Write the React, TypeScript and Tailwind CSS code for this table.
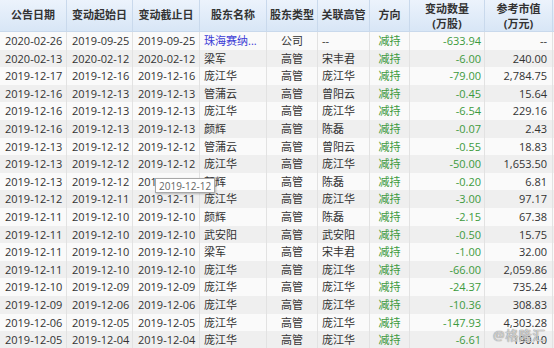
const COLS = 'grid grid-cols-[67px_66px_67px_67px_51px_52px_40px_75px_68px]';

interface Row {
  notice: string;
  start: string;
  end: string;
  holder: string;
  type: string;
  exec: string;
  change: string;
  value: string;
  link?: boolean;
}

const ROWS: Row[] = [
  { notice: '2020-02-26', start: '2019-09-25', end: '2019-09-25', holder: '珠海赛纳...', type: '公司', exec: '--', change: '-633.94', value: '--', link: true },
  { notice: '2020-02-13', start: '2020-02-12', end: '2020-02-12', holder: '梁军', type: '高管', exec: '宋丰君', change: '-6.00', value: '240.00' },
  { notice: '2019-12-17', start: '2019-12-16', end: '2019-12-16', holder: '庞江华', type: '高管', exec: '庞江华', change: '-79.00', value: '2,784.75' },
  { notice: '2019-12-16', start: '2019-12-13', end: '2019-12-13', holder: '管蒲云', type: '高管', exec: '曾阳云', change: '-0.45', value: '15.64' },
  { notice: '2019-12-16', start: '2019-12-13', end: '2019-12-13', holder: '庞江华', type: '高管', exec: '庞江华', change: '-6.54', value: '229.16' },
  { notice: '2019-12-16', start: '2019-12-13', end: '2019-12-13', holder: '颜辉', type: '高管', exec: '陈磊', change: '-0.07', value: '2.43' },
  { notice: '2019-12-13', start: '2019-12-12', end: '2019-12-12', holder: '管蒲云', type: '高管', exec: '曾阳云', change: '-0.55', value: '18.83' },
  { notice: '2019-12-13', start: '2019-12-12', end: '2019-12-12', holder: '庞江华', type: '高管', exec: '庞江华', change: '-50.00', value: '1,653.50' },
  { notice: '2019-12-13', start: '2019-12-12', end: '2019-12-12', holder: '颜辉', type: '高管', exec: '陈磊', change: '-0.20', value: '6.81' },
  { notice: '2019-12-12', start: '2019-12-11', end: '2019-12-11', holder: '庞江华', type: '高管', exec: '庞江华', change: '-3.00', value: '97.17' },
  { notice: '2019-12-11', start: '2019-12-10', end: '2019-12-10', holder: '颜辉', type: '高管', exec: '陈磊', change: '-2.15', value: '67.38' },
  { notice: '2019-12-11', start: '2019-12-10', end: '2019-12-10', holder: '武安阳', type: '高管', exec: '武安阳', change: '-0.50', value: '15.75' },
  { notice: '2019-12-11', start: '2019-12-10', end: '2019-12-10', holder: '梁军', type: '高管', exec: '宋丰君', change: '-1.00', value: '32.00' },
  { notice: '2019-12-11', start: '2019-12-10', end: '2019-12-10', holder: '庞江华', type: '高管', exec: '庞江华', change: '-66.00', value: '2,059.86' },
  { notice: '2019-12-10', start: '2019-12-09', end: '2019-12-09', holder: '庞江华', type: '高管', exec: '庞江华', change: '-24.37', value: '735.24' },
  { notice: '2019-12-09', start: '2019-12-06', end: '2019-12-06', holder: '庞江华', type: '高管', exec: '庞江华', change: '-10.36', value: '308.83' },
  { notice: '2019-12-06', start: '2019-12-05', end: '2019-12-05', holder: '庞江华', type: '高管', exec: '庞江华', change: '-147.93', value: '4,303.28' },
  { notice: '2019-12-05', start: '2019-12-04', end: '2019-12-04', holder: '庞江华', type: '高管', exec: '庞江华', change: '-6.61', value: '190.10' },
];

const HEAD = ['公告日期', '变动起始日', '变动截止日', '股东名称', '股东类型', '关联高管', '方向'];

export default function App() {
  return (
    <div className="relative w-[554px] h-[348px] overflow-hidden bg-white text-[11px] text-[#333] font-['Open_Sans','Noto_Sans_CJK_SC',sans-serif]">
      {/* header */}
      <div className={`${COLS} h-[32px] bg-gradient-to-b from-[#ecf3fc] to-[#d8e6f6] border-b border-[#c9d9ec] font-bold text-[#333]`}>
        {HEAD.map((h) => (
          <div key={h} className="flex items-center justify-center border-r border-[#c9d9ec]">{h}</div>
        ))}
        <div className="flex flex-col items-center justify-center leading-[15px] border-r border-[#c9d9ec]">
          <span>变动数量</span>
          <span>(万股)</span>
        </div>
        <div className="flex flex-col items-center justify-center leading-[15px] border-r border-[#c9d9ec]">
          <span>参考市值</span>
          <span>(万元)</span>
        </div>
      </div>

      {/* rows */}
      {ROWS.map((r, i) => (
        <div key={i} className={`${COLS} h-[17.6px] leading-[17.6px] ${i % 2 === 1 ? 'bg-[#efefef]' : 'bg-[#fafafa]'}`}>
          <div className="pl-[5px] border-r border-[#e2e2e2]">{r.notice}</div>
          <div className="pl-[5px] border-r border-[#e2e2e2]">{r.start}</div>
          <div className="pl-[5px] border-r border-[#e2e2e2]">{r.end}</div>
          <div className={`pl-[4px] border-r border-[#e2e2e2] truncate ${r.link ? 'text-[#3b3bd6]' : ''}`}>{r.holder}</div>
          <div className="text-center border-r border-[#e2e2e2]">{r.type}</div>
          <div className="pl-[4px] border-r border-[#e2e2e2]">{r.exec}</div>
          <div className="text-center text-[#3d9a3d] border-r border-[#e2e2e2]">减持</div>
          <div className="text-right pr-[3px] text-[#3d9a3d] border-r border-[#e2e2e2]">{r.change}</div>
          <div className="text-right pr-[5px] border-r border-[#e2e2e2]">{r.value}</div>
        </div>
      ))}

      {/* tooltip */}
      <div className="absolute left-[155px] top-[178px] h-[15px] px-[3px] leading-[14px] text-[10px] text-[#666] bg-white border border-[#a8a8a8] shadow-[1px_1px_2px_rgba(0,0,0,0.25)]">
        2019-12-12
      </div>

      {/* watermark */}
      <div className="absolute left-[493px] top-[326px] text-[13px] text-white/60 tracking-[0.5px] [text-shadow:0_0_1px_#888,0_0_1px_#888]">@格隆汇</div>
    </div>
  );
}
